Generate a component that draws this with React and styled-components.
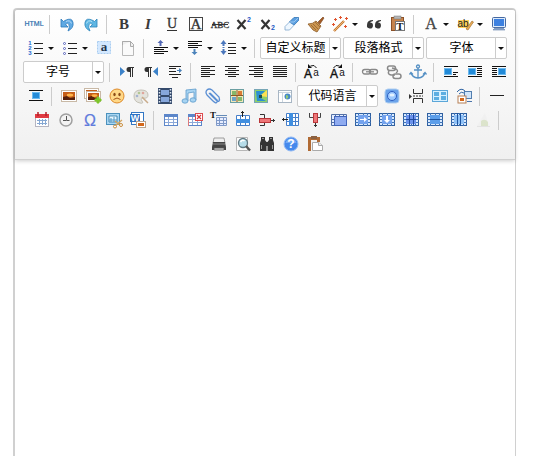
import React, { useState } from 'react';
import styled, { createGlobalStyle } from 'styled-components';

const GlobalStyle = createGlobalStyle`
    * {
        box-sizing: border-box;
    }
    body {
        margin: 0;
        background: #fff;
        font-family: "Liberation Sans", "Noto Sans CJK SC", sans-serif;
        font-size: 12px;
    }
`;

const Page = styled.main`
    min-height: 100vh;
    padding: 8px 20px 0 13px;
    display: flex;
    flex-direction: column;
`;

const Editor = styled.section`
    flex: 1;
    display: flex;
    flex-direction: column;
    border: 1px solid #d0d0d0;
    border-top-width: 2px;
    border-left-width: 2px;
    border-bottom: none;
    border-radius: 4px 4px 0 0;
`;

const Toolbar = styled.div`
    padding: 2px 0 3px 3px;
    border-bottom: 1px solid #d0d0d0;
    border-radius: 3px 3px 0 0;
    background: linear-gradient(to bottom, #fff, #f0f0f0);
    box-shadow: 0 1px 4px rgba(0, 0, 0, 0.2);
`;

const Row = styled.div`
    display: flex;
    justify-content: center;
    align-items: center;
    height: 24px;
`;

const Button = styled.button`
    flex: none;
    display: flex;
    align-items: center;
    justify-content: center;
    width: ${({ $narrow }) => ($narrow ? '8px' : '22px')};
    height: 22px;
    margin: 0 ${({ $joined }) => ($joined ? '0' : '1px')};
    padding: 0;
    border: none;
    background: none;
    cursor: pointer;
    opacity: ${({ disabled }) => (disabled ? 0.4 : 1)};
    &:hover {
        background: #fff5d4;
    }
`;

const Split = styled.div`
    flex: none;
    display: flex;
    margin: 0 3px 0 1px;
`;

const Separator = styled.span`
    flex: none;
    width: 1px;
    height: 19px;
    margin: 0 5px 0 3px;
    background: #ccc;
`;

const Combo = styled.div`
    flex: none;
    display: grid;
    grid-template-columns: 1fr 11px;
    width: 81px;
    height: 22px;
    margin: 0 2px 0 0;
    border: 1px solid #ccc;
    border-radius: 2px;
    background: #fff;
`;

const ComboSelect = styled.select`
    grid-area: 1 / 1 / 2 / 3;
    width: 100%;
    margin: 0;
    padding: 0 10px 0 0;
    border: none;
    background: none;
    appearance: none;
    color: #000;
    font: inherit;
    line-height: 20px;
    text-align: center;
    text-align-last: center;
`;

const ComboArrow = styled.span`
    grid-area: 1 / 2 / 2 / 3;
    display: flex;
    align-items: center;
    justify-content: center;
    border-left: 1px solid #ccc;
    pointer-events: none;
`;

const Content = styled.textarea`
    flex: 1;
    width: 100%;
    padding: 8px;
    border: none;
    outline: none;
    resize: none;
    background: transparent;
    font: inherit;
    font-size: 16px;
`;

const Glyph = styled.svg`
    display: block;
    width: 20px;
    height: 20px;
`;

const Caret = () => (
    <svg width="6" height="3" viewBox="0 0 6 3" aria-hidden="true">
        <path d="M0 0H6L3 3Z" fill="#111" />
    </svg>
);

// Horizontal bars: each item is [x, y, width]
const Bars = ({ items, color = '#222' }) =>
    items.map(([x, y, w]) => <rect key={`${x}-${y}`} x={x} y={y} width={w} height="1" fill={color} />);

const Letter = ({ x = 10, y = 15, size = 16, color = '#333', serif, children, ...rest }) => (
    <text
        x={x}
        y={y}
        fontSize={size}
        fill={color}
        textAnchor="middle"
        fontFamily={serif ? '"Liberation Serif", serif' : '"Liberation Sans", sans-serif'}
        {...rest}
    >
        {children}
    </text>
);

const Photo = ({ x, y, w, h }) => (
    <g>
        <rect x={x + 0.5} y={y + 0.5} width={w - 1} height={h - 1} fill="#fff" stroke="#c9b9a6" />
        <rect x={x + 2} y={y + 2} width={w - 4} height={h - 4} fill="#c65e17" />
        <path d={`M${x + 2} ${y + h - 2}v-3l4 -1 3 2 ${w - 11} -1v3z`} fill="#57200a" />
        <ellipse cx={x + w / 2 + 1} cy={y + h / 2 - 1} rx={w / 5} ry={h / 8} fill="#ffb54a" />
    </g>
);

const Page16 = () => (
    <path d="M4.500 3.500h8l3 3v11h-11z" fill="#fafafa" stroke="#b9b9b9" />
);

const Grid = ({ x = 3, y = 4, w = 14, h = 12, color = '#5c86c9', children }) => (
    <g>
        <rect x={x + 0.5} y={y + 0.5} width={w - 1} height={h - 1} fill="#fff" stroke={color} />
        <rect x={x} y={y} width={w} height="3" fill={color} />
        <path
            d={`M${x} ${y + 5.5}h${w}M${x} ${y + 8.5}h${w}M${x + 4.5} ${y + 3}v${h - 3}M${x + 9.5} ${y + 3}v${h - 3}`}
            stroke={color}
            opacity="0.7"
        />
        {children}
    </g>
);

// Table frame shared by the cell merging and splitting icons
const CellFrame = ({ children, fill = '#8db7f4' }) => (
    <g>
        <rect x="2.500" y="3.500" width="15" height="12" fill="#d9eaff" stroke="#2f5f9f" />
        <path d="M2 6.500h16M2 9.500h16M2 12.500h16M5.500 3v13M14.500 3v13M10.500 3v13" stroke="#3f73b5" />
        <rect x="5" y="5" width="10" height="9" fill={fill} />
        {children}
    </g>
);

const TextFlow = ({ x, y = 8, bars }) => (
    <g>
        <Bars items={bars} color="#111" />
        <rect x={x} y={y} width="7" height="6" fill="#238bd8" stroke="#6bb9ef" />
    </g>
);

const icons = {
    source: <Letter y={12} size={7} color="#2d70ad" stroke="#2d70ad" strokeWidth="0.200">HTML</Letter>,
    undo: (
        <g>
            <path d="M4 5v8h7L8.500 10.500Q11 8 12 10.500T11 17Q17 14 16 8.500T8 6.500L6.500 7.500Z" fill="#5fa9e3" stroke="#2b78ba" strokeWidth="0.800" />
            <path d="M9 7.500q4 -2 5.500 2" fill="none" stroke="#b5daf7" />
        </g>
    ),
    redo: (
        <g>
            <path d="M16 5v8H9L11.500 10.500Q9 8 8 10.500T9 17Q3 14 4 8.500T12 6.500L13.500 7.500Z" fill="#5fb6e3" stroke="#2b84ba" strokeWidth="0.800" />
            <path d="M11 7.500q-4 -2 -5.500 2" fill="none" stroke="#b5e4f7" />
        </g>
    ),
    bold: <Letter serif size={15} fontWeight="bold" color="#3a3a3a">B</Letter>,
    italic: <Letter serif size={15} fontStyle="italic" fontWeight="bold" color="#3a3a3a">I</Letter>,
    underline: (
        <g>
            <Letter serif y={14} size={14} stroke="#333" strokeWidth="0.300">U</Letter>
            <rect x="5" y="16" width="10" height="1" fill="#333" />
        </g>
    ),
    border: (
        <g>
            <rect x="3.500" y="3.500" width="13" height="13" fill="none" stroke="#444" />
            <Letter serif size={15} stroke="#333" strokeWidth="0.300">A</Letter>
        </g>
    ),
    strike: (
        <g>
            <Letter serif y={14} size={9} stroke="#333" strokeWidth="0.300">ABC</Letter>
            <rect x="2" y="10" width="16" height="1" fill="#333" />
        </g>
    ),
    sup: (
        <g>
            <path d="M3.500 6l8 9M11.500 6l-8 9" stroke="#333" strokeWidth="2.200" />
            <Letter x={15} y={8} size={7} color="#2459c4" fontWeight="bold">2</Letter>
        </g>
    ),
    sub: (
        <g>
            <path d="M3.500 6l8 9M11.500 6l-8 9" stroke="#333" strokeWidth="2.200" />
            <Letter x={15} y={16} size={7} color="#2459c4" fontWeight="bold">2</Letter>
        </g>
    ),
    eraser: (
        <g strokeWidth="0.800" strokeLinejoin="round">
            <path d="M3 12.500L12 3.500h4.500v3L7.500 16H3z" fill="#eef7ff" stroke="#7ea6cd" />
            <path d="M7.500 8L12 3.500h4.500v3L12 11z" fill="#5b9fe0" stroke="#3f7dbb" />
            <path d="M8 8h4l4 -4" fill="none" stroke="#a8d0f5" />
        </g>
    ),
    broom: (
        <g>
            <path d="M12 8l5 -5 1 1 -4 6z" fill="#a45b24" stroke="#75401a" strokeWidth="0.600" />
            <path d="M2 10q5 0 8 -3l5 5q-2 3 -4 6l-4 -2z" fill="#cc9650" stroke="#8c5925" strokeWidth="0.800" />
            <path d="M5 11l5 5M7 10l5 5M9 8l5 5" stroke="#8b5b2b" strokeWidth="0.700" />
        </g>
    ),
    wand: (
        <g>
            <path d="M4 17L14 7" stroke="#c5762d" strokeWidth="2.400" />
            <path d="M4 17L14 7" stroke="#f3c58d" strokeWidth="0.800" />
            <path d="M5.500 4v3M4 5.500h3M10.500 2v3M9 3.500h3M16.500 3v3M15 4.500h3M3.500 9v3M2 10.500h3M15.500 11v3M14 12.500h3" stroke="#e0532d" />
        </g>
    ),
    quote: (
        <path
            d="M9 6Q3 6 3 11a3 3 0 1 0 3 -2.500Q6.500 7.500 9 7zM17 6q-6 0 -6 5a3 3 0 1 0 3 -2.500Q14.500 7.500 17 7z"
            fill="#383838"
        />
    ),
    pasteText: (
        <g>
            <rect x="3.500" y="3.500" width="12" height="13" fill="#c7834b" stroke="#8c5127" />
            <rect x="6" y="2" width="7" height="3" fill="#b5b5b5" stroke="#777" strokeWidth="0.500" />
            <rect x="7.500" y="7.500" width="9" height="9" fill="#fff" stroke="#777" />
            <Letter serif x={12} y={16} size={11} color="#222" fontWeight="bold">T</Letter>
        </g>
    ),
    foreColor: <Letter serif size={16} stroke="#444" strokeWidth="0.300" color="#444">A</Letter>,
    backColor: (
        <g>
            <rect x="3" y="6" width="11" height="8" fill="#ffd25c" />
            <Letter x={8} y={13} size={10} color="#222">ab</Letter>
            <path d="M11 15l6 -8 1.500 1L13 16z" fill="#e8ad58" stroke="#9c6521" strokeWidth="0.600" />
        </g>
    ),
    fullscreen: (
        <g>
            <rect x="3.500" y="3.500" width="13" height="10" rx="1" fill="#dceafa" stroke="#4568a0" />
            <rect x="5" y="5" width="10" height="7" fill="#3c80e0" />
            <path d="M6 14h8l2 2H4z" fill="#8fa9ce" stroke="#6380ac" strokeWidth="0.600" />
        </g>
    ),
    orderedList: (
        <g>
            <Bars items={[[8, 5, 9], [8, 10, 9], [8, 15, 9]]} />
            <Letter x={4} y={7} size={6} color="#2467cf" fontWeight="bold">1</Letter>
            <Letter x={4} y={12} size={6} color="#2467cf" fontWeight="bold">2</Letter>
            <Letter x={4} y={17} size={6} color="#2467cf" fontWeight="bold">3</Letter>
        </g>
    ),
    bulletList: (
        <g>
            <Bars items={[[8, 5, 9], [8, 10, 9], [8, 15, 9]]} />
            <g fill="#fff" stroke="#5a64bd">
                <circle cx="4.500" cy="5.500" r="1" />
                <circle cx="4.500" cy="10.500" r="1" />
                <circle cx="4.500" cy="15.500" r="1" />
            </g>
        </g>
    ),
    selectAll: (
        <g>
            <rect x="3.500" y="3.500" width="13" height="12" fill="#d3e8ff" stroke="#a9cdf0" strokeDasharray="2 1" />
            <Letter serif x={10} y={13} size={13} color="#24344d" fontWeight="bold">a</Letter>
        </g>
    ),
    clear: (
        <g>
            <Page16 />
            <path d="M4.500 7V3.500h8l3 3v2h-3v-5" fill="#eee" stroke="#aaa" />
        </g>
    ),
    spaceTop: (
        <g>
            <path d="M9.500 2l3 3h-2v3h-2V5h-2z" fill="#5368b5" />
            <Bars items={[[3, 9, 14], [3, 11, 10], [3, 13, 14], [3, 15, 10]]} color="#111" />
        </g>
    ),
    spaceBottom: (
        <g>
            <Bars items={[[3, 3, 14], [3, 5, 10], [3, 7, 14], [3, 9, 10]]} color="#111" />
            <path d="M9.500 17l3 -3h-2v-3h-2v3h-2z" fill="#4c83bb" />
        </g>
    ),
    lineHeight: (
        <g>
            <path d="M4.500 2l3 4h-2v7h2l-3 4 -3 -4h2V6h-2z" fill="#4c78bd" />
            <path d="M3 8.500h3M3 10.500h3" stroke="#fff" />
            <Bars items={[[9, 5, 8], [9, 9, 8], [9, 12, 8], [9, 15, 8]]} />
        </g>
    ),
    ltr: (
        <g>
            <path d="M3 5v9l5 -4.500z" fill="#3c82c9" />
            <path d="M17 5h-5a2.500 2.500 0 0 0 0 5h1v5h1V6h1v9h1V6h1z" fill="#333" />
        </g>
    ),
    rtl: (
        <g>
            <path d="M17 5v9l-5 -4.500z" fill="#3c82c9" />
            <path d="M11 5H6a2.500 2.500 0 0 0 0 5h1v5h1V6h1v9h1V6h1z" fill="#333" />
        </g>
    ),
    indent: (
        <g>
            <Bars items={[[4, 4, 12], [4, 6, 7], [4, 9, 7], [4, 12, 12], [7, 15, 6]]} />
            <path d="M12 8h2V6l3 2.500 -3 2.500V9h-2z" fill="#4880b8" />
        </g>
    ),
    alignLeft: <Bars items={[[3, 4, 14], [3, 6, 9], [3, 8, 14], [3, 10, 9], [3, 12, 14], [3, 14, 9]]} />,
    alignCenter: <Bars items={[[3, 4, 14], [6, 6, 8], [3, 8, 14], [6, 10, 8], [3, 12, 14], [6, 14, 8]]} />,
    alignRight: <Bars items={[[3, 4, 14], [8, 6, 9], [3, 8, 14], [8, 10, 9], [3, 12, 14], [8, 14, 9]]} />,
    justify: <Bars items={[[3, 4, 14], [3, 6, 14], [3, 8, 14], [3, 10, 14], [3, 12, 14], [3, 14, 14]]} />,
    upper: (
        <g>
            <Letter x={5} y={16} size={12} color="#111" stroke="#111" strokeWidth="0.400">A</Letter>
            <Letter x={13} y={14} size={10} color="#111">a</Letter>
            <path d="M13.500 6q-2 -4 -6 -2" fill="none" stroke="#111" />
            <path d="M5 2v4h4z" fill="#111" />
        </g>
    ),
    lower: (
        <g>
            <Letter x={7} y={16} size={12} color="#111" stroke="#111" strokeWidth="0.400">A</Letter>
            <Letter x={15} y={14} size={10} color="#111">a</Letter>
            <path d="M6.500 6q2 -4 6 -2" fill="none" stroke="#111" />
            <path d="M15 2v4h-4z" fill="#111" />
        </g>
    ),
    link: (
        <g fill="none" stroke="#888" strokeWidth="1.300">
            <rect x="2.500" y="7.500" width="8" height="4.500" rx="2.200" />
            <rect x="9.500" y="7.500" width="8" height="4.500" rx="2.200" />
            <path d="M6 9.800h8" />
        </g>
    ),
    unlink: (
        <g fill="none" stroke="#8a8a8a" strokeWidth="1.500">
            <rect x="3.500" y="4" width="8" height="4.500" rx="2.200" />
            <rect x="9" y="12" width="8" height="4.500" rx="2.200" />
            <path d="M8 6l4 1q3 2 0 4M5 9q-2 3 2 4h4" />
        </g>
    ),
    anchor: (
        <g fill="none" stroke="#5590c4" strokeWidth="1.300">
            <circle cx="10" cy="4.500" r="1.500" />
            <path d="M10 6v10M6 8h8M3 10.500q1 5 7 5.500q6 -.5 7 -5.500M1.500 12.500l1.500 -2 2 2M15 12.500l2 -2 1.500 2" />
        </g>
    ),
    floatNone: <TextFlow x={3.5} y={6.5} bars={[[3, 4, 14], [12, 10, 5], [12, 12, 3], [3, 14, 14]]} />,
    floatLeft: (
        <TextFlow x={3.5} y={6.5} bars={[[3, 4, 14], [12, 6, 5], [12, 8, 5], [12, 10, 5], [12, 12, 5], [3, 14, 14]]} />
    ),
    floatRight: (
        <TextFlow x={9.5} y={6.5} bars={[[3, 4, 14], [3, 6, 5], [3, 8, 5], [3, 10, 5], [3, 12, 5], [3, 14, 14]]} />
    ),
    floatCenter: <TextFlow x={6.5} y={6.5} bars={[[3, 4, 14], [3, 14, 14]]} />,
    image: <Photo x={2} y={4} w={16} h={12} />,
    images: (
        <g>
            <Photo x={1} y={2} w={15} h={11} />
            <Photo x={3} y={5} w={15} h={11} />
            <path d="M14 11h2v2h2v2h-2v2h-2v-2h-2v-2h2z" fill="#7dc52b" stroke="#7dc52b" />
        </g>
    ),
    emotion: (
        <g>
            <circle cx="10" cy="10" r="7" fill="#ffd887" stroke="#dd8a2a" />
            <ellipse cx="7.500" cy="8.500" rx="1.200" ry="1.700" fill="#8b4a16" />
            <ellipse cx="12.500" cy="8.500" rx="1.200" ry="1.700" fill="#8b4a16" />
            <path d="M6.500 13.500q3.500 -3 7 0" fill="none" stroke="#a4521a" />
        </g>
    ),
    palette: (
        <g>
            <path d="M3 10Q3 4 10 4t7 5q0 4 -5 3 -3 0 -1 3t-2 2Q3 16 3 10z" fill="#e4e3dd" stroke="#c4c1b6" />
            <circle cx="6" cy="10" r="1.300" fill="#a4b4d0" />
            <circle cx="8" cy="7" r="1.300" fill="#b2c795" />
            <circle cx="12" cy="7" r="1.300" fill="#dfa69c" />
            <path d="M11 11l6 6" stroke="#c9ab8a" strokeWidth="1.500" />
        </g>
    ),
    video: (
        <g>
            <rect x="3" y="2" width="14" height="16" fill="#344a6c" />
            <path d="M6 4h8v5H6zM6 11h8v5H6z" fill="#86a7dc" />
            <path d="M4.500 3v14M15.500 3v14" stroke="#dce5f2" strokeWidth="1.500" strokeDasharray="1.500 1.500" />
        </g>
    ),
    music: (
        <g fill="#a8d4f2" stroke="#5d9aca" strokeWidth="0.800">
            <path d="M7 4l10 -1v11h-2V6L9 7v8H7z" />
            <ellipse cx="6" cy="15" rx="3" ry="2.200" />
            <ellipse cx="14" cy="14" rx="3" ry="2.200" />
        </g>
    ),
    attachment: (
        <path
            d="M6 7l7 7q2 2 3 1t0 -4L9 4Q6 2 4 4t0 5l6 6q3 3 4 1t-1 -3L7 7"
            fill="none"
            stroke="#5b8fd3"
            strokeWidth="1.300"
        />
    ),
    map: (
        <g>
            <rect x="3.500" y="3.500" width="13" height="13" fill="#f1e8bb" stroke="#6b9fa2" />
            <path d="M5 5h4v4H5zM11 11h4v4h-4z" fill="#86b86a" />
            <path d="M5 11h4v4H5z" fill="#6ba3c8" />
            <path d="M11 5h4v4h-4z" fill="#d97a35" />
            <path d="M10 4v12M4 9.500h12" stroke="#8d5926" />
        </g>
    ),
    gmap: (
        <g>
            <rect x="3.500" y="3.500" width="13" height="13" fill="#8fd06b" stroke="#77a6b6" />
            <path d="M5 5h9L8 11l7 4H6z" fill="#2a8fd2" />
            <path d="M16 4l-7 6 7 1z" fill="#ffe153" />
            <path d="M8 9h3v3H8z" fill="#214f47" />
        </g>
    ),
    frame: (
        <g>
            <rect x="3.500" y="4.500" width="13" height="12" fill="#fff" stroke="#a8b6c4" />
            <path d="M4 6.500h12M7.500 7v9" stroke="#cad5df" />
            <circle cx="12.500" cy="10.500" r="3" fill="#4688c8" />
            <path d="M11 9q3 0 2 3l-2 1z" fill="#94cc73" />
        </g>
    ),
    webapp: (
        <g>
            <rect x="3" y="3" width="14" height="14" rx="3" fill="#6ba3ea" stroke="#b0cff0" />
            <circle cx="10" cy="10" r="4.500" fill="#9cc9ff" stroke="#2f5fc0" />
            <ellipse cx="10" cy="9" rx="2.500" ry="1.500" fill="#e3f2ff" />
        </g>
    ),
    pageBreak: (
        <g fill="none" stroke="#333">
            <path d="M7.500 3v4.500h9V3M7.500 17v-4.500h9V17" />
            <path d="M7 10h2m1 0h2m1 0h2m1 0h1" />
            <path d="M3 8v5l3 -2.500z" fill="#333" stroke="none" />
        </g>
    ),
    template: (
        <g>
            <rect x="2.500" y="4.500" width="15" height="11" fill="#d8f0ff" stroke="#5ba6d8" />
            <path d="M4 6h5v4H4zM11 6h5v3h-5zM4 11h5v3H4zM11 10h5v4h-5z" fill="#5daee1" />
        </g>
    ),
    background: (
        <g>
            <rect x="10.500" y="5.500" width="7" height="7" fill="#d1e5fa" stroke="#527eaf" />
            <rect x="4" y="10" width="8" height="7" fill="#fff" stroke="#b57f55" />
            <rect x="6" y="12" width="4" height="3" fill="#d3671a" />
            <path d="M3 6q4 -5 8 -1M5 8q2 -3 5 -1" fill="none" stroke="#3165a3" />
            <path d="M13 15.500h5" stroke="#4b74aa" />
        </g>
    ),
    hr: <rect x="3" y="9" width="14" height="1" fill="#222" />,
    date: (
        <g>
            <rect x="3.500" y="4.500" width="13" height="12" fill="#fff" stroke="#b5b5c1" />
            <rect x="3" y="4" width="14" height="4" fill="#e03a42" />
            <path d="M6 2v4M14 2v4" stroke="#b42129" strokeWidth="1.500" />
            <path d="M5 10.500h10M5 13.500h10M7.500 9v6M10.500 9v6M13.500 9v6" stroke="#86a8d3" />
        </g>
    ),
    time: (
        <g fill="none">
            <circle cx="10" cy="10" r="6" fill="#f3f3f3" stroke="#a0a0a0" strokeWidth="1.500" />
            <path d="M10.500 6v4.500h3M7 10.500h3" stroke="#555" />
        </g>
    ),
    special: <Letter y={16} size={16} color="#5f7bdc" stroke="#5f7bdc" strokeWidth="0.200">Ω</Letter>,
    snap: (
        <g>
            <rect x="2.500" y="3.500" width="13" height="11" fill="#a9d6f2" stroke="#4b91bd" />
            <path d="M5 6h8v6H5z" fill="#e9f7ff" stroke="#2f77a4" strokeWidth="0.800" />
            <path d="M7 12V8m3 4V7m-5 3h8" stroke="#5197c4" />
            <path d="M11 16l7 -6M11 11l6 5" stroke="#d3a560" strokeWidth="1.300" />
            <circle cx="11" cy="16.500" r="1.500" fill="#fff" stroke="#c78c3d" />
            <circle cx="17" cy="15" r="1.500" fill="#fff" stroke="#c78c3d" />
        </g>
    ),
    word: (
        <g>
            <rect x="3.500" y="2.500" width="12" height="12" fill="#fff" stroke="#3277c4" />
            <rect x="2" y="4" width="10" height="8" fill="#2d72c4" />
            <Letter x={7} y={11} size={9} color="#fff" fontWeight="bold">W</Letter>
            <rect x="8.500" y="11.500" width="9" height="6" fill="#fff" stroke="#b9a58f" />
            <rect x="10" y="13" width="6" height="3" fill="#d3671a" />
        </g>
    ),
    table: <Grid />,
    deleteTable: (
        <Grid>
            <rect x="10.500" y="3.500" width="7" height="7" fill="#fff" stroke="#dd4b4e" />
            <path d="M12 5l4 4M16 5l-4 4" stroke="#d93438" strokeWidth="1.200" />
            <path d="M3.500 7v9" stroke="#dd7a7a" />
        </Grid>
    ),
    tableTitle: (
        <g>
            <Letter serif x={4} y={8} size={9} color="#111" fontWeight="bold">T</Letter>
            <rect x="7" y="5" width="11" height="1" fill="#648bb8" />
            <path d="M7.500 7.500h10v8h-10zM7 10.500h11M7 13.500h11M10.500 7v9M14.500 7v9" fill="#e7edff" stroke="#7f9ac8" />
        </g>
    ),
    insertRow: (
        <g>
            <path d="M3.500 5.500h13v10h-13zM7.500 5v11M12.500 5v11" fill="#fff" stroke="#477fc9" />
            <rect x="3" y="9" width="14" height="4" fill="#418fe0" />
            <path d="M9.500 1v6M8 2.500h3" stroke="#222" />
        </g>
    ),
    deleteRow: (
        <g>
            <path d="M3 4.500h4.500v4M3 15.500h4.500v-4" fill="none" stroke="#333" />
            <rect x="2.500" y="8.500" width="11" height="4" fill="#ed7779" stroke="#ba373a" />
            <path d="M14 10.500h4M16.500 9v3" stroke="#333" />
        </g>
    ),
    insertCol: (
        <g>
            <path d="M5.500 3.500h12v12h-12zM5 7.500h13M5 11.500h13M14.500 3v13" fill="#fff" stroke="#477fc9" />
            <rect x="8" y="3" width="4" height="13" fill="#418fe0" />
            <path d="M1 9.500h6M2.500 8v3" stroke="#222" />
        </g>
    ),
    deleteCol: (
        <g>
            <path d="M4.500 3v4.500h4M15.500 3v4.500h-4" fill="none" stroke="#444" />
            <rect x="8.500" y="3.500" width="4" height="9" fill="#ed7779" stroke="#ba373a" />
            <path d="M10.500 13v4M9 15.500h3" stroke="#333" />
        </g>
    ),
    mergeCells: (
        <g>
            <path d="M2.500 4.500h15v11h-15zM6.500 4v3M10.500 4v3M14.500 4v3M2 9.500h3M2 12.500h3" fill="#e3edff" stroke="#5370a5" />
            <rect x="5.500" y="6.500" width="12" height="9" fill="#8fabf0" stroke="#4165bb" />
        </g>
    ),
    mergeRight: (
        <CellFrame fill="#74a3ee">
            <path d="M7 9h4V7l3 2.500 -3 2.500v-2H7z" fill="#fff" />
        </CellFrame>
    ),
    mergeDown: (
        <CellFrame fill="#74a3ee">
            <path d="M9 6h2v4h2l-3 3 -3 -3h2z" fill="#fff" />
        </CellFrame>
    ),
    splitCells: (
        <CellFrame fill="#6c93ec">
            <path d="M8.500 3v13M12.500 3v13M5 9.500h10" stroke="#204ba0" />
        </CellFrame>
    ),
    splitRows: (
        <CellFrame fill="#5c9eea">
            <path d="M5 9.500h10" stroke="#1d55a2" />
        </CellFrame>
    ),
    splitCols: (
        <CellFrame fill="#8fc1f6">
            <path d="M8.500 3v13M11.500 3v13" stroke="#1d55a2" />
        </CellFrame>
    ),
    chart: (
        <g>
            <path d="M4 16l8 -13 4 13z" fill="#ececec" />
            <path d="M8 11q4 -3 7 1v4H8z" fill="#b9cd92" />
            <rect x="4" y="16" width="13" height="1" fill="#ccc" />
        </g>
    ),
    print: (
        <g>
            <path d="M5 4h10l1 5H4z" fill="#eee" stroke="#888" strokeWidth="0.800" />
            <path d="M4 8h12l1 5v3H3v-3z" fill="#454545" />
            <path d="M4 10h12" stroke="#888" />
            <path d="M5 14h10v2H5z" fill="#ddd" stroke="#555" strokeWidth="0.800" />
        </g>
    ),
    preview: (
        <g>
            <path d="M3.500 3.500h11v13h-11z" fill="#fbfbfb" stroke="#b7b7b7" />
            <circle cx="10" cy="9" r="4.500" fill="#b6dce9" stroke="#607983" strokeWidth="1.300" />
            <path d="M7.500 8q2 -3 4 -1" fill="none" stroke="#fff" strokeWidth="1.500" />
            <path d="M13 12l4 4.500" stroke="#555" strokeWidth="2.400" />
        </g>
    ),
    search: (
        <g fill="#333">
            <path d="M4 3h4v3l1.500 2V17H3V9l1 -3zM12 3h4v3l1 3v8h-6.500V8L12 6z" />
            <rect x="8" y="8" width="4" height="4" />
            <path d="M4.500 11v4M15.500 11v4M5 4.500h2M13 4.500h2" stroke="#999" />
        </g>
    ),
    help: (
        <g>
            <circle cx="10" cy="10" r="7" fill="#4589ec" stroke="#91b9f4" />
            <path d="M4.500 9q1 -4.500 5.500 -4.500T15.500 9z" fill="#76aaf5" />
            <Letter y={14} size={12} color="#fff" fontWeight="bold">?</Letter>
        </g>
    ),
    draft: (
        <g>
            <path d="M4.500 17V4.500h9V8" fill="none" stroke="#b06a34" strokeWidth="3" />
            <rect x="6" y="2" width="6" height="3" fill="#8a6142" />
            <path d="M7.500 8.500h6l4 3v5h-10z" fill="#fff" stroke="#aaa" />
            <path d="M13.500 8.500v3h4" fill="#eee" stroke="#aaa" />
        </g>
    )
};

const combos = {
    customStyle: ['自定义标题', '文档标题', '段落标题', '强调'],
    paragraph: ['段落格式', '段落', '标题 1', '标题 2', '标题 3'],
    fontFamily: ['字体', '宋体', '微软雅黑', '楷体', '黑体'],
    fontSize: ['字号', '10px', '12px', '14px', '16px', '18px'],
    codeLang: ['代码语言', 'CSS', 'HTML', 'JavaScript', 'PHP']
};

// '|' is a separator, '+' a button with its own drop-down, '=' a select
const rows = [
    'source | undo redo | bold italic underline border strike sup sub eraser broom +wand quote pasteText | +foreColor +backColor fullscreen',
    '+orderedList +bulletList selectAll clear | +spaceTop +spaceBottom +lineHeight | =customStyle =paragraph =fontFamily',
    '=fontSize | ltr rtl indent | alignLeft alignCenter alignRight justify | upper lower | link unlink anchor | floatNone floatLeft floatRight',
    'floatCenter | image images emotion palette video music attachment map gmap frame =codeLang webapp pageBreak template background | hr',
    'date time special snap word | table deleteTable tableTitle insertRow deleteRow insertCol deleteCol mergeCells mergeRight mergeDown splitCells splitRows splitCols chart |',
    'print preview search help draft'
].map(row => row.split(' '));

const Icon = ({ name }) => (
    <Glyph viewBox="0 0 20 20" aria-hidden="true">{icons[name]}</Glyph>
);

const ComboBox = ({ name }) => {
    const [ value, saveValue ] = useState(combos[name][0]);

    return (
        <Combo>
            <ComboSelect
                name={name}
                aria-label={combos[name][0]}
                value={value}
                onChange={e => saveValue(e.target.value)}
            >
                {combos[name].map(option => <option key={option}>{option}</option>)}
            </ComboSelect>
            <ComboArrow><Caret /></ComboArrow>
        </Combo>
    );
}

const Tool = ({ item }) => {
    if( item === '|' ) return <Separator />;

    const name = item.slice(1);

    if( item[0] === '=' ) return <ComboBox name={name} />;

    if( item[0] === '+' ) {
        return (
            <Split>
                <Button type="button" aria-label={name} $joined><Icon name={name} /></Button>
                <Button type="button" aria-label={`${name} menu`} $joined $narrow><Caret /></Button>
            </Split>
        );
    }

    return (
        <Button type="button" aria-label={item} disabled={item === 'chart'}>
            <Icon name={item} />
        </Button>
    );
}

const App = () => {

    const [ content, saveContent ] = useState('');

    return (
        <>
            <GlobalStyle />
            <Page>
                <Editor>
                    <Toolbar role="toolbar">
                        {rows.map((row, i) => (
                            <Row key={i}>
                                {row.map((item, j) => <Tool key={j} item={item} />)}
                            </Row>
                        ))}
                    </Toolbar>
                    <Content
                        aria-label="content"
                        value={content}
                        onChange={e => saveContent(e.target.value)}
                    />
                </Editor>
            </Page>
        </>
    );
}

export default App;
